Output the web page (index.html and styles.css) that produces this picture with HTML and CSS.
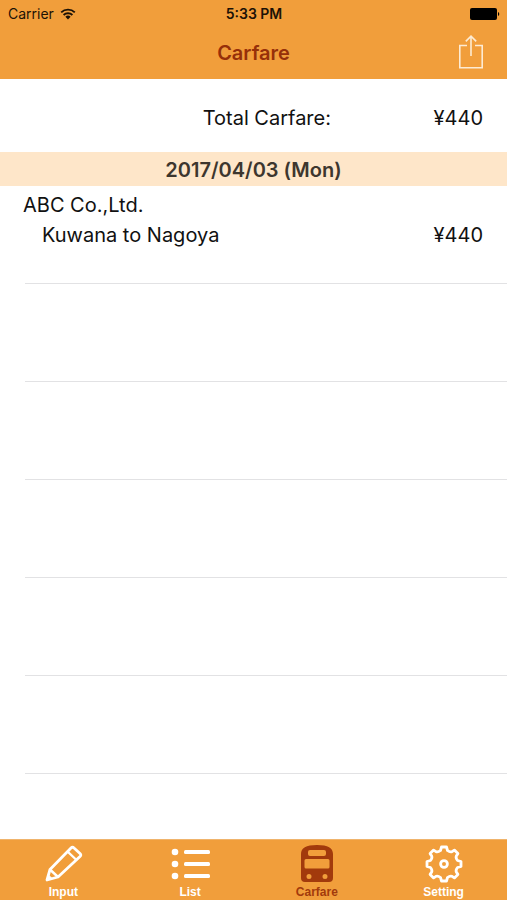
FILE: index.html
```html
<!DOCTYPE html>
<html lang="en">
<head>
    <meta charset="UTF-8">
    <meta name="viewport" content="width=device-width, initial-scale=1.0">
    <title>Carfare</title>
    <link rel="stylesheet" href="styles.css">
</head>
<body>

<header class="top">
    <div class="status-bar">
        <div class="carrier">
            <span>Carrier</span>
            <svg width="16" height="12" viewBox="0 0 16 12">
                <path d="M1.2 4.4a9.8 9.8 0 0 1 13.6 0M3.6 7a6.4 6.4 0 0 1 8.8 0" fill="none" stroke="#1c1206" stroke-width="1.9"/>
                <path d="M8 11.4L5.4 8.8a3.8 3.8 0 0 1 5.2 0z" fill="#1c1206"/>
            </svg>
        </div>
        <span class="time">5:33 PM</span>
        <svg class="battery" width="30" height="12" viewBox="0 0 30 12">
            <rect x="0" y="0" width="27" height="12" rx="2"/>
            <path d="M28 4a2.2 2.2 0 0 1 0 4z"/>
        </svg>
    </div>
    <div class="nav-bar">
        <h1>Carfare</h1>
        <button class="share" type="button" aria-label="Share">
            <svg width="26" height="36" viewBox="0 0 26 36">
                <path d="M9 10.5H1.8V32.8H24.2V10.5H17M13 21V1.2M7.8 6.4L13 1.2l5.2 5.200" fill="none" stroke="#fdebd3" stroke-width="1.6"/>
            </svg>
        </button>
    </div>
</header>

<main>
    <div class="total">
        <span>Total Carfare:</span>
        <span class="amount">¥440</span>
    </div>
    <h2>2017/04/03 (Mon)</h2>
    <ul class="rows">
        <li>
            <div class="company">ABC Co.,Ltd.</div>
            <div class="trip">
                <span>Kuwana to Nagoya</span>
                <span class="amount">¥440</span>
            </div>
        </li>
        <li></li>
        <li></li>
        <li></li>
        <li></li>
        <li></li>
    </ul>
</main>

<nav class="tabs">
    <a href="#input">
        <svg width="40" height="40" viewBox="0 0 40 40" fill="none" stroke="#fff" stroke-width="2.8" stroke-linejoin="round">
            <path d="M4 36L7 25.500L28 4Q29.500 2.500 31 4L37 9.500Q38.500 11 37 12.500L15 33z"/>
            <path d="M7 25.500L15 33M24.500 7.500L33.500 16" stroke-width="2.4"/>
            <path d="M4 36l1.400-5 3.800 3.600z" fill="#fff" stroke-width="1"/>
        </svg>
        <span>Input</span>
    </a>
    <a href="#list">
        <svg width="40" height="40" viewBox="0 0 40 40" fill="#fff">
            <circle cx="5" cy="8" r="3.3"/>
            <circle cx="5" cy="20" r="3.3"/>
            <circle cx="5" cy="32" r="3.3"/>
            <rect x="14" y="6" width="26" height="4" rx="1.5"/>
            <rect x="14" y="18" width="26" height="4" rx="1.5"/>
            <rect x="14" y="30" width="26" height="4" rx="1.5"/>
        </svg>
        <span>List</span>
    </a>
    <a href="#carfare" class="active">
        <svg width="40" height="40" viewBox="0 0 40 40">
            <path fill="#a23a0c" fill-rule="evenodd" d="M4 34V10C4 4 9 1 20 1S36 4 36 10V34Q36 38 32 38H8Q4 38 4 34zM13 6Q11 6 11 8V10Q11 12 13 12H27Q29 12 29 10V8Q29 6 27 6zM9 15Q7.500 15 7.500 16.500V23Q7.500 24.500 9 24.500H31Q32.500 24.500 32.500 23V16.500Q32.500 15 31 15zM12 30a2.500 2.500 0 1 0 0 5a2.500 2.500 0 1 0 0-5zM28 30a2.500 2.500 0 1 0 0 5a2.500 2.500 0 1 0 0-5z"/>
        </svg>
        <span>Carfare</span>
    </a>
    <a href="#setting">
        <svg width="40" height="40" viewBox="-20 -20 40 40" fill="none" stroke="#fff" stroke-width="2.8" stroke-linejoin="round">
            <path id="gear" d="M17-2.500V2.500L13.500 3.500Q11.500 6 12.300 8L13.900 10.400L10.400 13.900L8 12.300Q6 11.500 3.500 13.500L2.500 17H-2.500L-3.500 13.500Q-6 11.500-8 12.300L-10.400 13.900L-13.900 10.400L-12.300 8Q-11.500 6-13.500 3.500L-17 2.500V-2.500L-13.500-3.500Q-11.500-6-12.300-8L-13.900-10.400L-10.400-13.900L-8-12.300Q-6-11.500-3.500-13.500L-2.500-17H2.500L3.500-13.500Q6-11.500 8-12.300L10.400-13.900L13.900-10.400L12.300-8Q11.500-6 13.500-3.500z"/>
            <circle r="3.4"/>
        </svg>
        <span>Setting</span>
    </a>
</nav>

</body>
</html>
```
FILE: styles.css
```css
* {
    box-sizing: border-box;
}
body {
    margin: 0;
    min-height: 100vh;
    display: flex;
    flex-direction: column;
    font-family: Inter, "Liberation Sans", sans-serif;
    font-size: 20px;
    line-height: 30px;
    color: #111;
    background: #fff;
}
.top {
    background: #f19e3b;
}
.status-bar {
    display: grid;
    grid-template-columns: 1fr auto 1fr;
    align-items: center;
    height: 27px;
    padding: 0 7px 0 8px;
    font-size: 14px;
    line-height: 27px;
    color: #1c1206;
}
.carrier {
    display: flex;
    align-items: center;
    gap: 6px;
}
.time {
    font-weight: 600;
}
.battery {
    justify-self: end;
    fill: #000;
}
.nav-bar {
    display: grid;
    grid-template-columns: 1fr auto 1fr;
    align-items: center;
    height: 52px;
    padding: 0 23px;
}
h1 {
    grid-column: 2;
    margin: 0;
    font-size: 20px;
    font-weight: 600;
    color: #963009;
}
.share {
    justify-self: end;
    padding: 0;
    border: none;
    background: none;
    cursor: pointer;
}
.share svg {
    display: block;
}
main {
    flex: 1;
}
.total {
    display: flex;
    justify-content: flex-end;
    align-items: center;
    height: 73px;
    padding: 4px 24px 0;
}
.amount {
    width: 152px;
    text-align: right;
}
h2 {
    margin: 0;
    padding-top: 2px;
    font-size: 20px;
    font-weight: 600;
    line-height: 32px;
    text-align: center;
    color: #3d362e;
    background: #fee6c9;
}
.rows {
    margin: 0;
    padding: 0 0 0 25px;
    list-style: none;
}
.rows li {
    height: 98px;
    padding: 4px 24px 0 0;
    border-bottom: 1px solid #e2e2e4;
}
.company {
    margin-left: -2px;
}
.trip {
    display: flex;
    justify-content: space-between;
    padding-left: 17px;
}
.tabs {
    display: grid;
    grid-template-columns: repeat(4, 1fr);
    height: 61px;
    background: #f19e3b;
    border-top: 1px solid #f0b46c;
}
.tabs a {
    display: flex;
    flex-direction: column;
    align-items: center;
    padding-top: 4px;
    font-family: "Liberation Sans", Arial, sans-serif;
    font-size: 12px;
    font-weight: bold;
    line-height: 16px;
    color: #fff;
    text-decoration: none;
}
.tabs a.active {
    color: #a23a0c;
}
```
